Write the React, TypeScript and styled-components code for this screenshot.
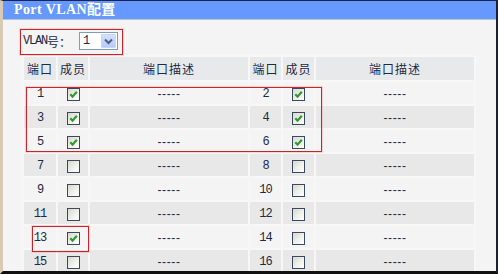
import React from "react";
import styled, { createGlobalStyle } from "styled-components";

const Global = createGlobalStyle`
  html, body { margin: 0; padding: 0; background: #f4f4f4; }
  * { box-sizing: border-box; }
`;

const Frame = styled.div`
  position: relative;
  width: 498px;
  height: 274px;
  overflow: hidden;
  background: #f4f4f4;
  border-top: 1px solid #1b2550;
  border-left: 3px solid #d8cab4;
  border-right: 2px solid #1e2030;
  border-bottom: 3px solid #111;
  font-family: "Noto Sans CJK SC", sans-serif;
  color: #1c2a44;
`;

const TitleBar = styled.div`
  height: 19px;
  background: #6699ff;
  border-bottom: 1px solid #b8c2d6;
  padding-left: 11px;
  color: #fff;
  font-family: "Liberation Serif", "Noto Sans CJK SC", serif;
  font-weight: bold;
  font-size: 14px;
  letter-spacing: 0.4px;
  line-height: 17px;
  white-space: nowrap;
`;

const Body = styled.div`
  padding: 12px 0 0 19px;
`;

const VlanRow = styled.div`
  display: flex;
  align-items: center;
  height: 18px;
  margin-left: 1px;
  font-size: 12px;
`;

const Mono = styled.span`
  font-family: "Liberation Mono", monospace;
  font-size: 12px;
  letter-spacing: -1.2px;
`;

const Cjk = styled.span`
  font-family: "Noto Sans CJK SC", sans-serif;
  font-size: 12px;
`;

const Select = styled.div`
  display: flex;
  align-items: center;
  justify-content: space-between;
  width: 39px;
  height: 18px;
  margin-left: 8px;
  background: #fff;
  border: 1px solid #7f9db9;
  padding: 0 1px 0 3px;
`;

const Arrow = styled.div`
  width: 15px;
  height: 14px;
  display: flex;
  align-items: center;
  justify-content: center;
  background: linear-gradient(180deg, #d4e0fc 0%, #b7cbf6 100%);
  border: 1px solid #c8d6f8;
  border-radius: 1px;
`;

const Table = styled.table`
  margin-top: 5px;
  border-collapse: separate;
  border-spacing: 2px;
  table-layout: fixed;
  width: 454px;
  background: #f7f7f7;
`;

const Th = styled.th<{ $w: number }>`
  width: ${(p) => p.$w}px;
  height: 23px;
  padding: 0;
  background: #e8e9ea;
  font-weight: normal;
  font-size: 12px;
  text-align: center;
  vertical-align: middle;
  letter-spacing: 1px;
`;

const Td = styled.td<{ $shade: boolean }>`
  height: 22px;
  padding: 0;
  background: ${(p) => (p.$shade ? "#e8e8e8" : "#f4f4f4")};
  text-align: center;
  vertical-align: middle;
  font-size: 12px;
  line-height: 14px;
`;

const Num = styled.span`
  font-family: "Liberation Mono", monospace;
  font-size: 12px;
  letter-spacing: -1px;
  color: #1c2a44;
`;

const Dash = styled.span`
  font-family: "Liberation Sans", sans-serif;
  font-size: 12px;
  letter-spacing: 0.6px;
  color: #1c2a44;
`;

const Box = styled.span`
  display: inline-flex;
  align-items: center;
  justify-content: center;
  width: 13px;
  height: 13px;
  margin-top: 2px;
  vertical-align: middle;
  border: 1px solid #3a4a5c;
  background: linear-gradient(135deg, #d8d8d2 0%, #f2f2ee 60%, #ffffff 100%);
`;

const Mark = styled.div<{ $l: number; $t: number; $w: number; $h: number }>`
  position: absolute;
  left: ${(p) => p.$l}px;
  top: ${(p) => p.$t}px;
  width: ${(p) => p.$w}px;
  height: ${(p) => p.$h}px;
  border: 1px solid #c8242c;
  box-shadow: 0 0 0 1px rgba(240, 150, 150, 0.35);
  pointer-events: none;
`;

const Check: React.FC<{ on: boolean }> = ({ on }) => (
  <Box>
    {on && (
      <svg width="9" height="9" viewBox="0 0 9 9">
        <path d="M1.3 4.2 L3.6 6.6 L7.8 1.8" fill="none" stroke="#2e9a2e" strokeWidth="2.2" />
      </svg>
    )}
  </Box>
);

const rows: [number, boolean, number, boolean][] = [
  [1, true, 2, true],
  [3, true, 4, true],
  [5, true, 6, true],
  [7, false, 8, false],
  [9, false, 10, false],
  [11, false, 12, false],
  [13, true, 14, false],
  [15, false, 16, false],
];

export default function App() {
  return (
    <>
      <Global />
      <Frame>
        <TitleBar>Port VLAN配置</TitleBar>
        <Body>
          <VlanRow>
            <Mono>VLAN</Mono>
            <Cjk>号：</Cjk>
            <Select>
              <Num>1</Num>
              <Arrow>
                <svg width="9" height="7" viewBox="0 0 9 7">
                  <path d="M1 1.5 L4.5 5 L8 1.5" fill="none" stroke="#4a5d86" strokeWidth="2" />
                </svg>
              </Arrow>
            </Select>
          </VlanRow>
          <Table>
            <thead>
              <tr>
                <Th $w={32}>端口</Th>
                <Th $w={30}>成员</Th>
                <Th $w={158}>端口描述</Th>
                <Th $w={31}>端口</Th>
                <Th $w={31}>成员</Th>
                <Th $w={158}>端口描述</Th>
              </tr>
            </thead>
            <tbody>
              {rows.map(([a, ca, b, cb], i) => {
                const shade = i % 2 === 1;
                return (
                  <tr key={a}>
                    <Td $shade={shade}><Num>{a}</Num></Td>
                    <Td $shade={shade}><Check on={ca} /></Td>
                    <Td $shade={shade}><Dash>-----</Dash></Td>
                    <Td $shade={shade}><Num>{b}</Num></Td>
                    <Td $shade={shade}><Check on={cb} /></Td>
                    <Td $shade={shade}><Dash>-----</Dash></Td>
                  </tr>
                );
              })}
            </tbody>
          </Table>
        </Body>
        <Mark $l={17} $t={28} $w={103} $h={26} />
        <Mark $l={23} $t={86} $w={296} $h={65} />
        <Mark $l={29} $t={225} $w={57} $h={26} />
      </Frame>
    </>
  );
}
